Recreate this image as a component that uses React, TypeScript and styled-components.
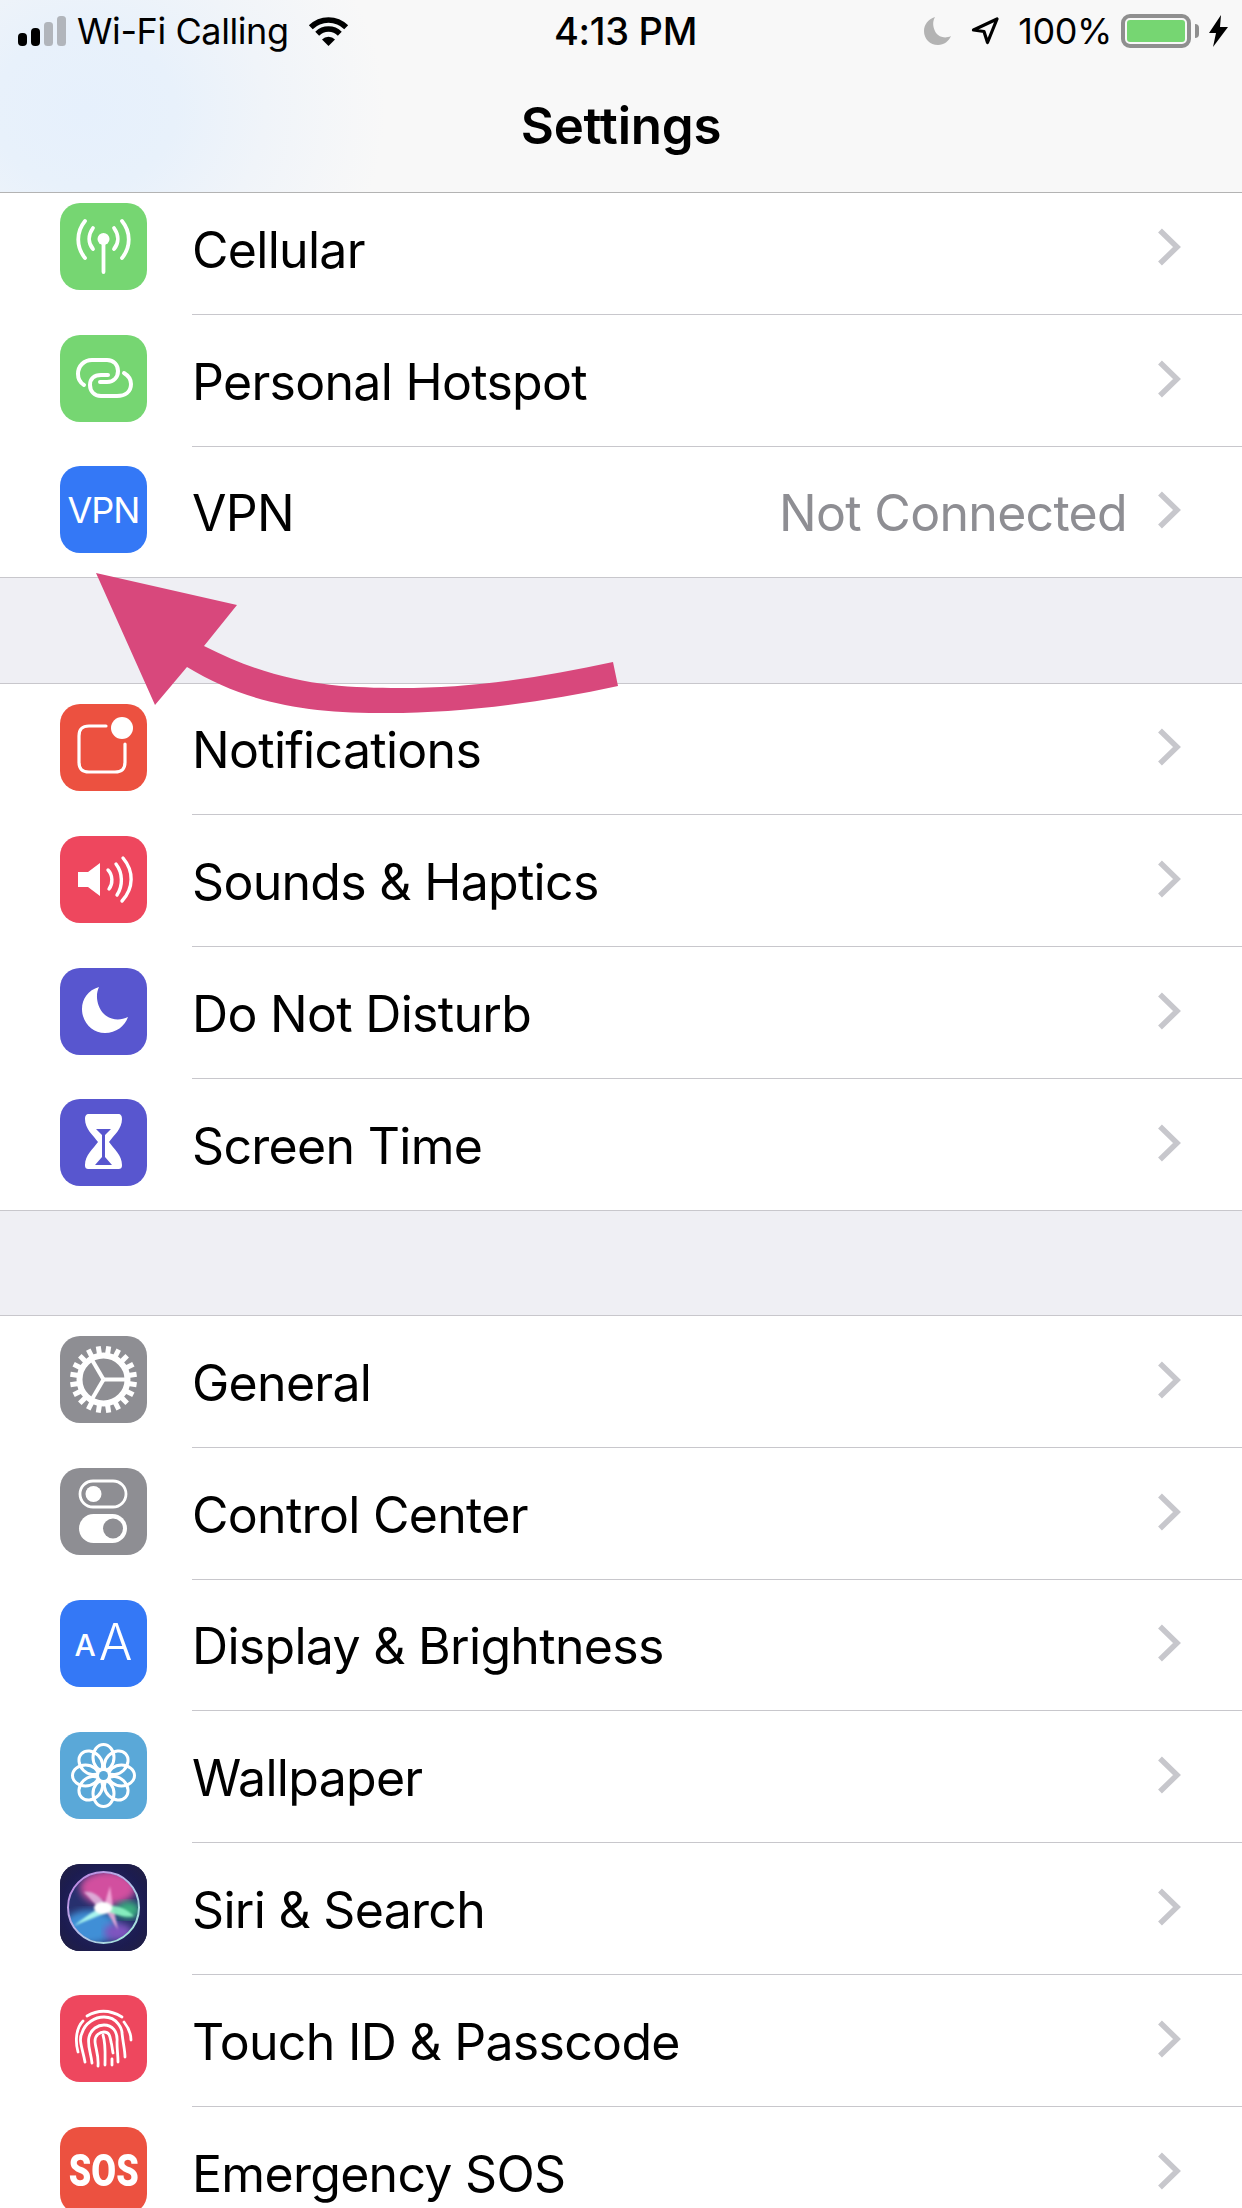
import React from "react";
import styled, { createGlobalStyle } from "styled-components";

const Global = createGlobalStyle`
  html, body { margin: 0; padding: 0; background: #efeff4; }
  * { box-sizing: border-box; }
`;

const FONT = `Inter, "Liberation Sans", sans-serif`;

const Screen = styled.div`
  position: relative;
  width: 1242px;
  height: 2208px;
  overflow: hidden;
  display: flex;
  flex-direction: column;
  background: #efeff4;
  font-family: ${FONT};
  color: #000;
`;

const Header = styled.header`
  flex: none;
  height: 193px;
  border-bottom: 1px solid #b3b3b3;
  background:
    radial-gradient(ellipse 300px 260px at 85px 110px, #e6f0fc 0%, #e8f1fb 30%, #f0f4f9 60%, rgba(248, 248, 248, 0) 100%),
    #f8f8f8;
  display: flex;
  flex-direction: column;
`;

const StatusBar = styled.div`
  height: 62px;
  padding: 0 14px 0 18px;
  display: grid;
  grid-template-columns: 1fr auto 1fr;
  align-items: center;
  font-size: 36px;
  letter-spacing: -0.4px;
`;

const StatusLeft = styled.div`
  display: flex;
  align-items: center;
  gap: 11px;
`;

const StatusRight = styled.div`
  display: flex;
  align-items: center;
  justify-content: flex-end;
  gap: 9px;
`;

const Carrier = styled.span`
  margin-right: 8px;
`;

const Time = styled.span`
  font-weight: 500;
  font-size: 38px;
  letter-spacing: -0.3px;
  margin-left: 5px;
`;

const StatusGlyph = styled.svg`
  margin-right: 10px;
`;

const Battery = styled.div`
  position: relative;
  width: 70px;
  height: 34px;
  border: 4px solid #8f8f8f;
  border-radius: 9px;
  padding: 2px;
  margin-right: 9px;
  &::after {
    content: "";
    position: absolute;
    right: -12px;
    top: 6px;
    width: 4px;
    height: 14px;
    background: #8f8f8f;
    border-radius: 0 4px 4px 0;
  }
`;

const BatteryFill = styled.div`
  width: 100%;
  height: 100%;
  background: #76d672;
  border-radius: 3px;
`;

const Title = styled.h1`
  margin: 0;
  flex: 1;
  display: flex;
  align-items: center;
  justify-content: center;
  font-size: 51px;
  font-weight: 600;
  letter-spacing: -0.2px;
  padding-bottom: 4px;
`;

const Scroller = styled.main`
  flex: 1;
  overflow: hidden;
`;

const Sections = styled.div`
  margin-top: -11px;
  display: flex;
  flex-direction: column;
  gap: 104.2px;
`;

const Section = styled.section`
  background: #fff;
  border-top: 1px solid #c8c7cc;
  border-bottom: 1px solid #c8c7cc;
`;

const Row = styled.div`
  display: flex;
  align-items: center;
  padding-left: 60px;
  gap: 45px;
  height: 131.8px;
  &:last-child {
    height: 130.8px;
  }
`;

const IconBox = styled.div<{ $bg: string }>`
  flex: none;
  width: 87px;
  height: 87px;
  border-radius: 20px;
  background: ${(p) => p.$bg};
  color: #fff;
  overflow: hidden;
  display: flex;
  align-items: center;
  justify-content: center;
  margin-top: -4px;
  svg {
    display: block;
  }
`;

const RowBody = styled.div`
  flex: 1;
  height: 100%;
  display: flex;
  align-items: center;
  padding-right: 61px;
  border-bottom: 1px solid #c8c7cc;
  ${Row}:last-child & {
    border-bottom: none;
  }
`;

const Label = styled.span`
  flex: 1;
  font-size: 50px;
  letter-spacing: -0.7px;
  padding-top: 3px;
`;

const Detail = styled.span`
  font-size: 50px;
  letter-spacing: -0.7px;
  color: #8e8e93;
  margin-right: 30px;
  padding-top: 3px;
`;

const ChevronMark = styled.svg`
  flex: none;
  margin-top: -3px;
`;

const VpnGlyph = styled.span`
  font-size: 36px;
  font-weight: 400;
  letter-spacing: -1px;
`;

const SosGlyph = styled.span`
  font-family: Roboto, sans-serif;
  font-size: 45px;
  font-weight: 900;
  display: inline-block;
  transform: scaleX(0.8);
`;

const AaGlyph = styled.div`
  display: flex;
  align-items: baseline;
  gap: 3px;
  line-height: 1;
  margin-top: -2px;
`;

const SmallA = styled.span`
  font-size: 30px;
  font-weight: 500;
  transform: translateY(-4px);
`;

const BigA = styled.span`
  font-size: 50px;
  font-weight: 300;
`;

const Overlay = styled.svg`
  position: absolute;
  left: 0;
  top: 0;
  pointer-events: none;
`;

const W = { fill: "none", stroke: "#fff", strokeLinecap: "round" as const, strokeLinejoin: "round" as const };

const Svg = ({ children }: { children: React.ReactNode }) => (
  <svg width="87" height="87" viewBox="0 0 87 87">{children}</svg>
);

const Chevron = () => (
  <ChevronMark width="24" height="38" viewBox="0 0 24 38">
    <path d="M3 2.5 L20 19 L3 35.5" fill="none" stroke="#c7c7cc" strokeWidth="5.5" />
  </ChevronMark>
);

const CellularIcon = () => (
  <Svg>
    <g {...W} strokeWidth="3.8">
      <path d="M43.5 36 V69" />
      <path d="M33 25 C28 32 28 40 33 46" />
      <path d="M54 25 C59 32 59 40 54 46" />
      <path d="M25 18 C16 29 16 44 25 55" />
      <path d="M62 18 C71 29 71 44 62 55" />
    </g>
    <circle cx="43.5" cy="36" r="6" fill="#fff" />
  </Svg>
);

const HotspotIcon = () => (
  <Svg>
    <g {...W} strokeWidth="4">
      <path d="M24 50 C19 47 18 43 18 39 C18 31 24 25 32 25 H47 C54 25 58 30 58 36 C58 42 54 47 47 47 H40" />
      <path d="M64 38 C69 41 71 45 71 49 C71 57 65 61 57 61 H41 C34 61 30 56 30 50 C30 44 34 40 41 40 H48" />
    </g>
  </Svg>
);

const NotificationsIcon = () => (
  <Svg>
    <path d="M46 22 H29 C22 22 19 25 19 32 V58 C19 65 22 68 29 68 H55 C62 68 65 65 65 58 V40" {...W} strokeWidth="3.2" />
    <circle cx="62" cy="24" r="11" fill="#fff" />
  </Svg>
);

const SoundsIcon = () => (
  <Svg>
    <path d="M18 36 H28 L40 27 V60 L28 51 H18 Z" fill="#fff" />
    <g {...W} strokeWidth="3.4">
      <path d="M48 34 C53 39 53 48 49 53" />
      <path d="M56 28 C63 37 63 50 57 59" />
      <path d="M63 22 C74 35 74 52 62 65" />
    </g>
  </Svg>
);

const MoonIcon = () => (
  <Svg>
    <path d="M39 19 C28 22 22 31 22 41 C22 54 32 65 45 65 C56 65 65 58 68 49 C60 53 50 52 44 46 C37 39 35 27 39 19 Z" fill="#fff" />
  </Svg>
);

const HourglassIcon = ({ bg }: { bg: string }) => (
  <Svg>
    <path d="M29 15 H58 C61 15 62 17 62 20 C62 30 54 36 49 43 C54 50 62 56 62 66 C62 69 61 70 58 70 H29 C26 70 25 69 25 66 C25 56 33 50 38 43 C33 36 25 30 25 20 C25 17 26 15 29 15 Z" fill="#fff" />
    <path d="M36 30 H51 L45 36 V58 L52 66 H35 L42 58 V36 Z" fill={bg} />
  </Svg>
);

const GearIcon = () => (
  <Svg>
    <circle cx="43.5" cy="43.5" r="24" {...W} strokeWidth="6" />
    {Array.from({ length: 20 }, (_, i) => (
      <path
        key={i}
        d="M43.5 10 V20"
        stroke="#fff"
        strokeWidth="5"
        transform={`rotate(${i * 18 + 9} 43.5 43.5)`}
      />
    ))}
    <g stroke="#fff" strokeWidth="4">
      <path d="M43.5 43.5 H67" />
      <path d="M43.5 43.5 L31.5 23" />
      <path d="M43.5 43.5 L31.5 64" />
    </g>
  </Svg>
);

const ControlIcon = ({ bg }: { bg: string }) => (
  <Svg>
    <rect x="20" y="13" width="46" height="26" rx="13" {...W} strokeWidth="2.8" />
    <circle cx="33.5" cy="26" r="8" fill="#fff" />
    <rect x="19" y="46" width="48" height="29" rx="14.5" fill="#fff" />
    <circle cx="53" cy="60.5" r="10" fill={bg} />
  </Svg>
);

const WallpaperIcon = () => (
  <Svg>
    <g {...W} strokeWidth="3">
      {Array.from({ length: 8 }, (_, i) => (
        <ellipse key={i} cx="43.5" cy="25.5" rx="10.5" ry="13" transform={`rotate(${i * 45} 43.5 43.5)`} />
      ))}
      <circle cx="43.5" cy="43.5" r="6" fill="#fff" />
    </g>
    <circle cx="43.5" cy="43.5" r="4.5" fill="#5aa8d8" />
  </Svg>
);

const SiriIcon = () => (
  <Svg>
    <defs>
      <radialGradient id="siriBg" cx="50%" cy="50%" r="70%">
        <stop offset="0%" stopColor="#2a2f73" />
        <stop offset="70%" stopColor="#1c1c50" />
        <stop offset="100%" stopColor="#22203f" />
      </radialGradient>
      <linearGradient id="siriRing" x1="0" y1="0" x2="1" y2="1">
        <stop offset="0%" stopColor="#c07ae0" />
        <stop offset="50%" stopColor="#b5bde8" />
        <stop offset="100%" stopColor="#9ff0d8" />
      </linearGradient>
      <filter id="siriBlur"><feGaussianBlur stdDeviation="3.5" /></filter>
      <filter id="siriSoft"><feGaussianBlur stdDeviation="1" /></filter>
      <clipPath id="siriClip"><circle cx="43.5" cy="43.5" r="35" /></clipPath>
    </defs>
    <rect width="87" height="87" fill="url(#siriBg)" />
    <circle cx="43.5" cy="43.5" r="36" fill="#27306e" />
    <g clipPath="url(#siriClip)">
      <ellipse cx="48" cy="24" rx="28" ry="17" fill="#d2509f" filter="url(#siriBlur)" />
      <ellipse cx="30" cy="63" rx="27" ry="17" fill="#3f8fd6" filter="url(#siriBlur)" />
      <ellipse cx="68" cy="46" rx="12" ry="9" fill="#3aae80" filter="url(#siriBlur)" />
      <ellipse cx="58" cy="68" rx="14" ry="9" fill="#7f55c0" filter="url(#siriBlur)" />
    </g>
    <g filter="url(#siriSoft)">
      <path d="M14 62 C28 50 36 46 44 42 L50 48 C38 52 28 56 14 62 Z" fill="#a8f4ee" />
      <path d="M24 28 C34 26 42 34 46 42 L40 44 C34 40 30 34 24 28 Z" fill="#e0b8e0" opacity="0.85" />
      <path d="M50 22 L53 42 L58 66 C52 56 46 48 44 42 Z" fill="#f5b0dd" opacity="0.85" />
      <path d="M44 42 C54 40 66 44 74 52 C64 54 54 50 44 46 Z" fill="#8ff5c5" opacity="0.9" />
      <ellipse cx="43" cy="44" rx="9" ry="6" fill="#fff" />
    </g>
    <circle cx="43.5" cy="43.5" r="35.5" fill="none" stroke="url(#siriRing)" strokeWidth="2" />
  </Svg>
);

const TouchIcon = () => (
  <Svg>
    <g {...W} strokeWidth="2.8">
      <path d="M27 21 Q44 11 62 22" />
      <path d="M23 26 C16 33 15 46 18 57" />
      <path d="M64 27 C68 32 71 39 71 45" />
      <path d="M25 67 C23 55 18 45 22 38 C25 28 35 22 44 22 C58 22 62 35 62 38 C63 48 65 55 65 62" />
      <path d="M32 68 C31 58 27 50 29 42 C31 34 38 30 44 30 C52 30 58 36 57 47 C57 55 58 60 58 67" />
      <path d="M38 71 C39 60 35 52 35 46 C35 40 40 37 44 37 C50 37 50 42 51 47 C52 50 52 53 53 58" />
      <path d="M43 40 C46 50 45 60 45 70" />
      <path d="M52 64 V70" />
    </g>
  </Svg>
);

type Item = { label: string; bg: string; icon: React.ReactNode; detail?: string };

const PURPLE = "#5856cf";
const GRAY = "#8e8e93";

const groups: Item[][] = [
  [
    { label: "Cellular", bg: "#76d672", icon: <CellularIcon /> },
    { label: "Personal Hotspot", bg: "#76d672", icon: <HotspotIcon /> },
    { label: "VPN", bg: "#3478f6", icon: <VpnGlyph>VPN</VpnGlyph>, detail: "Not Connected" },
  ],
  [
    { label: "Notifications", bg: "#ec5140", icon: <NotificationsIcon /> },
    { label: "Sounds & Haptics", bg: "#ee475e", icon: <SoundsIcon /> },
    { label: "Do Not Disturb", bg: PURPLE, icon: <MoonIcon /> },
    { label: "Screen Time", bg: PURPLE, icon: <HourglassIcon bg={PURPLE} /> },
  ],
  [
    { label: "General", bg: GRAY, icon: <GearIcon /> },
    { label: "Control Center", bg: GRAY, icon: <ControlIcon bg={GRAY} /> },
    { label: "Display & Brightness", bg: "#3478f6", icon: <AaGlyph><SmallA>A</SmallA><BigA>A</BigA></AaGlyph> },
    { label: "Wallpaper", bg: "#5aa8d8", icon: <WallpaperIcon /> },
    { label: "Siri & Search", bg: "#1c1c50", icon: <SiriIcon /> },
    { label: "Touch ID & Passcode", bg: "#ee475e", icon: <TouchIcon /> },
    { label: "Emergency SOS", bg: "#ec5140", icon: <SosGlyph>SOS</SosGlyph> },
  ],
];

const App = () => (
  <Screen>
    <Global />
    <Header>
      <StatusBar>
        <StatusLeft>
          <svg width="48" height="30" viewBox="0 0 48 30">
            <rect x="0" y="17" width="9" height="13" rx="4" fill="#000" />
            <rect x="13" y="12" width="9" height="18" rx="4" fill="#000" />
            <rect x="26" y="6" width="9" height="24" rx="3.5" fill="#b1b5bb" />
            <rect x="39" y="0" width="9" height="30" rx="3.5" fill="#b1b5bb" />
          </svg>
          <Carrier>Wi-Fi Calling</Carrier>
          <svg width="41" height="30" viewBox="0 0 41 30">
            <path d="M2.8 11.3 A25 25 0 0 1 38.2 11.3" fill="none" stroke="#000" strokeWidth="5.5" />
            <path d="M9.2 17.7 A16 16 0 0 1 31.8 17.7" fill="none" stroke="#000" strokeWidth="5.5" />
            <path d="M20.5 30 L14 23.5 A9 9 0 0 1 27 23.5 Z" fill="#000" />
          </svg>
        </StatusLeft>
        <Time>4:13 PM</Time>
        <StatusRight>
          <StatusGlyph width="28" height="28" viewBox="0 0 28 28">
            <path d="M11 0 C4 2 0 8 0 14 C0 22 6 28 14 28 C20 28 25 24 27 19 C21 22 15 20 12 16 C9 11 8 5 11 0 Z" fill="#b3b3b3" />
          </StatusGlyph>
          <StatusGlyph width="28" height="28" viewBox="0 0 28 28">
            <path d="M2.5 13 L26 2 L16.5 25.5 L13 14.5 Z" fill="none" stroke="#000" strokeWidth="3.2" strokeLinejoin="round" />
          </StatusGlyph>
          <span>100%</span>
          <Battery><BatteryFill /></Battery>
          <svg width="19" height="32" viewBox="0 0 19 32">
            <path d="M12 0 L0 18 H7 L4 32 L19 12 H11 Z" fill="#000" />
          </svg>
        </StatusRight>
      </StatusBar>
      <Title>Settings</Title>
    </Header>
    <Scroller>
      <Sections>
        {groups.map((items, g) => (
          <Section key={g}>
            {items.map((item) => (
              <Row key={item.label}>
                <IconBox $bg={item.bg}>{item.icon}</IconBox>
                <RowBody>
                  <Label>{item.label}</Label>
                  {item.detail && <Detail>{item.detail}</Detail>}
                  <Chevron />
                </RowBody>
              </Row>
            ))}
          </Section>
        ))}
      </Sections>
    </Scroller>
    <Overlay width="1242" height="2208" viewBox="0 0 1242 2208">
      <path
        d="M96 573 L237 605 L204 646 C280 685 340 688 400 688 C470 688 540 678 613 662 L618 686 C540 703 460 713 388 713 C310 713 250 705 187 667 L155 705 Z"
        fill="#d8487c"
      />
    </Overlay>
  </Screen>
);

export default App;
